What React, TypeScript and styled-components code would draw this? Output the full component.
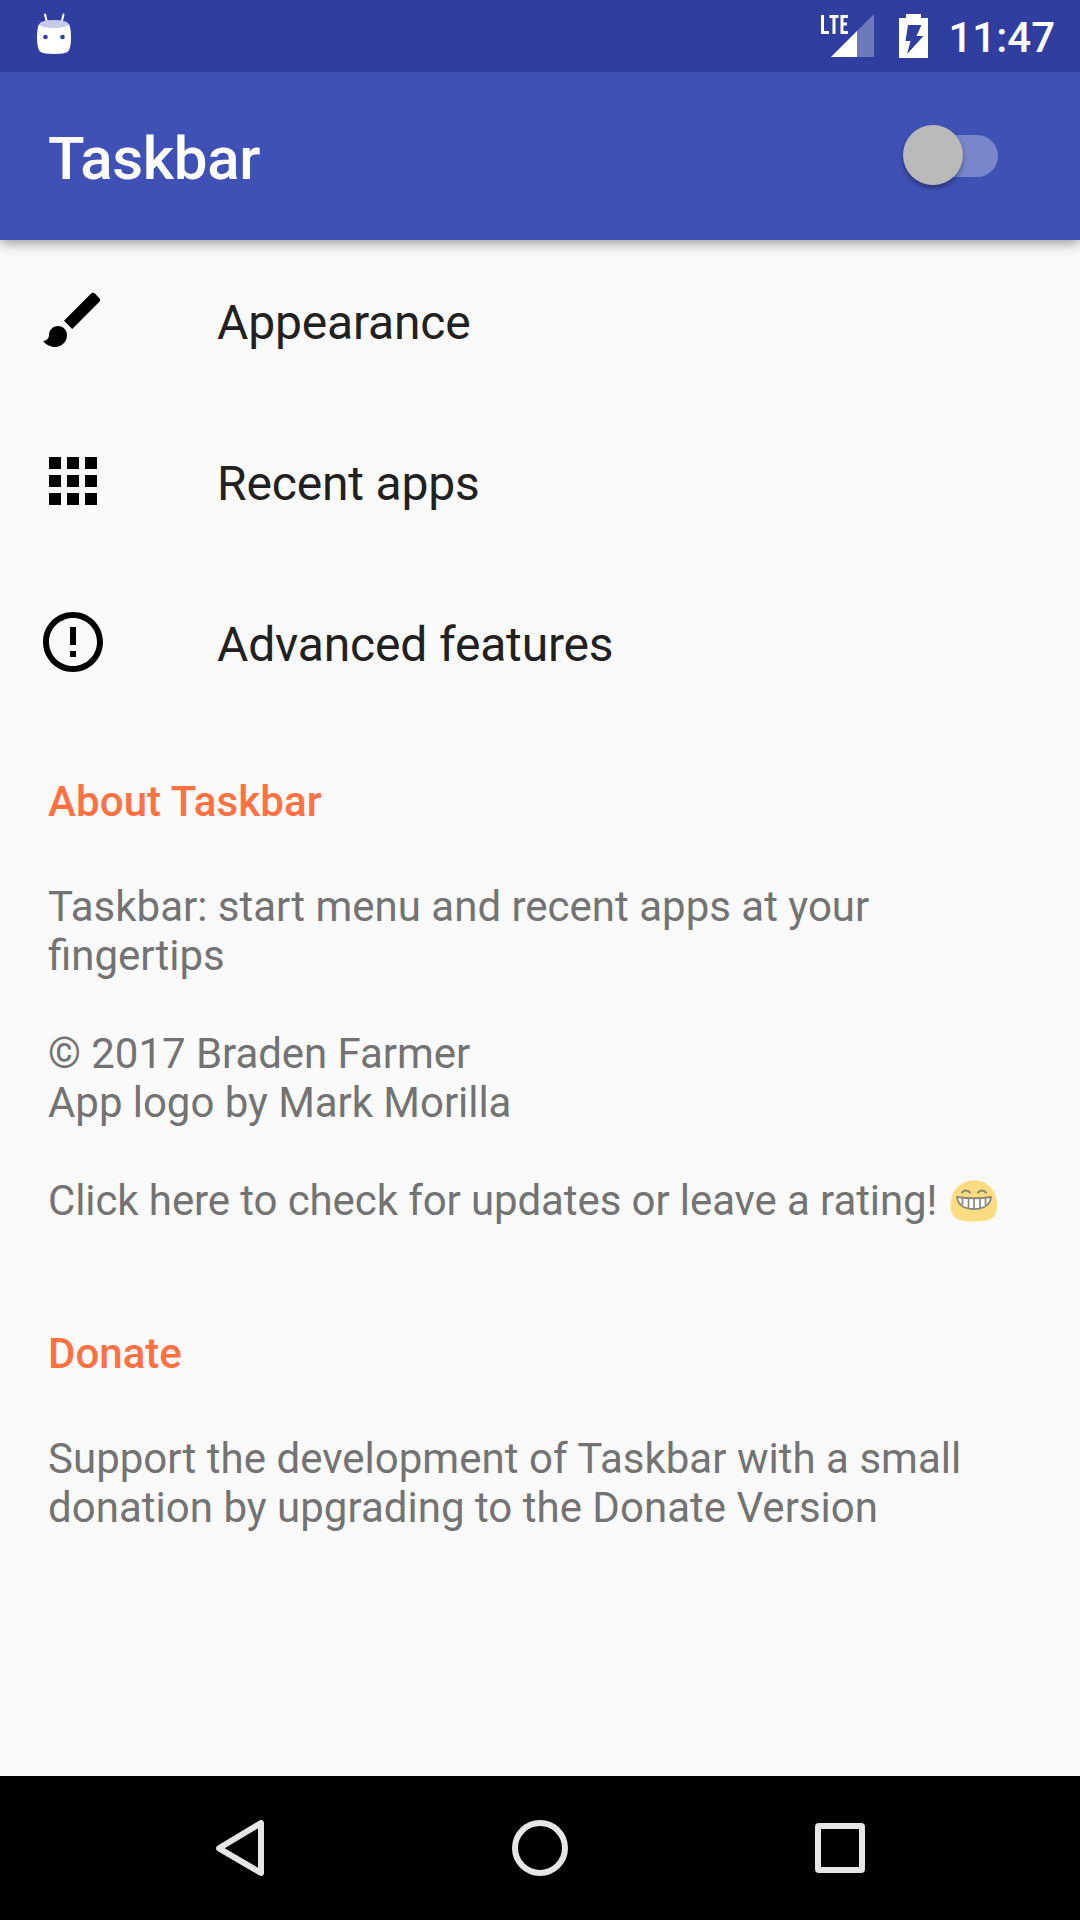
import React from "react";
import styled, { createGlobalStyle } from "styled-components";

const GlobalStyle = createGlobalStyle`
  * { box-sizing: border-box; }
  body { margin: 0; background: #fafafa; }
  svg { display: block; flex: none; }
`;

const Screen = styled.div`
  width: 1080px;
  height: 1920px;
  display: flex;
  flex-direction: column;
  overflow: hidden;
  background: #fafafa;
  font-family: Roboto, "Noto Sans", sans-serif;
`;

const StatusBar = styled.header`
  height: 72px;
  flex: none;
  z-index: 1;
  display: flex;
  align-items: center;
  justify-content: space-between;
  padding: 0 25px 0 36px;
  background: #303f9f;
  color: #fff;
`;

const StatusIcons = styled.div`
  display: flex;
  align-items: center;
`;

const Clock = styled.time`
  margin-left: 20px;
  padding-top: 4px;
  font-size: 42px;
  line-height: 50px;
  font-weight: 500;
`;

const Spacer = styled.span`
  width: 24px;
`;

const NotificationSlot = styled.div`
  padding-bottom: 5px;
`;

const AppBar = styled.div`
  height: 168px;
  flex: none;
  display: flex;
  align-items: center;
  justify-content: space-between;
  padding: 0 82px 0 48px;
  background: #3f51b5;
  box-shadow: 0 3px 12px rgba(0, 0, 0, 0.4);
`;

const Title = styled.h1`
  margin: 0;
  padding-top: 5px;
  font-size: 60px;
  line-height: 70px;
  font-weight: 500;
  letter-spacing: -0.35px;
  color: #fff;
`;

const Switch = styled.button`
  display: flex;
  align-items: center;
  width: 92px;
  height: 42px;
  margin: 0;
  padding: 0;
  border: 0;
  border-radius: 21px;
  background: #7986cb;
`;

const Thumb = styled.span`
  flex: none;
  width: 60px;
  height: 60px;
  margin-left: -3.5px;
  margin-top: -2px;
  border-radius: 50%;
  background: #b9b9b9;
  box-shadow: 0 3px 5px rgba(0, 0, 0, 0.35);
`;

const Menu = styled.nav`
  display: flex;
  flex-direction: column;
  gap: 1px;
  flex: none;
`;

const MenuRow = styled.div`
  display: flex;
  align-items: center;
  height: 160px;
  padding-left: 37px;
  gap: 108px;
  font-size: 48px;
  line-height: 56px;
  letter-spacing: -0.17px;
  color: #212121;
`;

const MenuLabel = styled.span`
  padding-top: 6px;
`;

const Section = styled.section<{ $top: number }>`
  flex: none;
  padding: ${(p) => p.$top}px 48px 0;
`;

const SectionTitle = styled.h2<{ $tracking?: number }>`
  margin: 0 0 56px;
  font-size: 42px;
  line-height: 49px;
  font-weight: 500;
  letter-spacing: ${(p) => p.$tracking ?? 0}px;
  color: #ff7043;
`;

const Paragraph = styled.p<{ $tracking?: number }>`
  margin: 0 0 49px;
  font-size: 42px;
  line-height: 49px;
  letter-spacing: ${(p) => p.$tracking ?? 0}px;
  white-space: nowrap;
  color: #737373;
`;

const Emoji = styled.svg`
  && { display: inline-block; vertical-align: -7px; margin-left: 2px; }
`;

const NavBar = styled.footer`
  height: 144px;
  flex: none;
  margin-top: auto;
  display: flex;
  align-items: center;
  justify-content: center;
  gap: 228px;
  background: #000;
`;

const AndroidIcon = () => (
  <svg width="36" height="42" viewBox="0 0 36 42">
    <path d="M9 1.500l2 8M27.500 1.500l-2 8" stroke="#fff" strokeWidth="2" strokeLinecap="round" />
    <path d="M3 11Q1 16 1 24Q1 34 3.500 38Q5 41 18 41Q31 41 32.500 38Q35 34 35 24Q35 16 33 11Q31 14 18 14Q5 14 3 11Z" fill="#fff" />
    <ellipse cx="18" cy="11" rx="14.500" ry="4" fill="#c5cae9" />
    <circle cx="9.500" cy="24" r="2.300" fill="#303f9f" />
    <circle cx="26.500" cy="24" r="2.300" fill="#303f9f" />
  </svg>
);

const SignalIcon = () => (
  <svg width="54" height="44" viewBox="0 0 54 44">
    <path d="M53 0V43H10Z" fill="#fff" opacity="0.3" />
    <path d="M36 17V43H10Z" fill="#fff" />
    <path d="M1.500 1V18.500H8M8.500 2.500H17.500M13 2.500V20M27 2.500H21V18.500H27M21 10H26" fill="none" stroke="#fff" strokeWidth="3" />
  </svg>
);

const BatteryIcon = () => (
  <svg width="29" height="44" viewBox="0 0 29 44">
    <path fillRule="evenodd" d="M7 0H22V4H29V44H0V4H7ZM9 11L6.500 27H11.500L8 40L24.500 22H17.500L22.500 11Z" fill="#fff" />
  </svg>
);

const BrushIcon = () => (
  <svg width="72" height="72" viewBox="0 0 24 24">
    <path d="M7 14c-1.660 0-3 1.340-3 3 0 1.310-1.160 2-2 2 .92 1.220 2.490 2 4 2 2.210 0 4-1.790 4-4 0-1.660-1.340-3-3-3zm13.710-9.370l-1.340-1.340a.996.996 0 0 0-1.410 0L9 12.250 11.750 15l8.960-8.960a.996.996 0 0 0 0-1.410z" />
  </svg>
);

const AppsIcon = () => (
  <svg width="72" height="72" viewBox="0 0 24 24">
    <path d="M4 8h4V4H4v4zm6 12h4v-4h-4v4zm-6 0h4v-4H4v4zm0-6h4v-4H4v4zm6 0h4v-4h-4v4zm6-10v4h4V4h-4zm-6 4h4V4h-4v4zm6 6h4v-4h-4v4zm0 6h4v-4h-4v4z" />
  </svg>
);

const AlertIcon = () => (
  <svg width="72" height="72" viewBox="0 0 24 24">
    <path d="M11 15h2v2h-2zm0-8h2v6h-2zm.99-5C6.470 2 2 6.480 2 12s4.470 10 9.990 10C17.520 22 22 17.520 22 12S17.520 2 11.990 2zM12 20c-4.420 0-8-3.580-8-8s3.580-8 8-8 8 3.580 8 8-3.580 8-8 8z" />
  </svg>
);

const GrinEmoji = () => (
  <Emoji width="48" height="42" viewBox="0 0 48 42" role="img" aria-label="grinning face">
    <path d="M24 .5C38 .5 47 11 47 25C47 37 42 41.500 24 41.500S.5 37 .5 25C.5 11 10 .5 24 .5Z" fill="#fbdc80" />
    <path d="M12 12.500Q15.500 8.500 20 12.500M28 12.500Q32 8.500 36 12.500" fill="none" stroke="#8a8672" strokeWidth="1.900" strokeLinecap="round" />
    <path d="M7 17Q24 19.500 41 17C40 25 34 29 24 29S8 25 7 17Z" fill="#fff" stroke="#8b897c" strokeWidth="1.900" strokeLinejoin="round" />
    <path d="M12.500 18V25M18.500 18.500V28M24 18.500V28.500M30 18.500V28M35.500 18V25" stroke="#8b897c" strokeWidth="1.700" />
  </Emoji>
);

const NavGlyph = ({ children }: { children: React.ReactNode }) => (
  <svg width="72" height="72" viewBox="0 0 72 72" fill="none" stroke="#e6e6e6" strokeWidth="6" strokeLinejoin="round">
    {children}
  </svg>
);

const menu = [
  { label: "Appearance", Icon: BrushIcon },
  { label: "Recent apps", Icon: AppsIcon },
  { label: "Advanced features", Icon: AlertIcon },
];

export default function App() {
  return (
    <>
      <GlobalStyle />
      <Screen>
        <StatusBar>
          <NotificationSlot>
            <AndroidIcon />
          </NotificationSlot>
          <StatusIcons>
            <SignalIcon />
            <Spacer />
            <BatteryIcon />
            <Clock>11:47</Clock>
          </StatusIcons>
        </StatusBar>
        <AppBar>
          <Title>Taskbar</Title>
          <Switch role="switch" aria-checked={false}>
            <Thumb />
          </Switch>
        </AppBar>
        <Menu>
          {menu.map(({ label, Icon }) => (
            <MenuRow key={label}>
              <Icon />
              <MenuLabel>{label}</MenuLabel>
            </MenuRow>
          ))}
        </Menu>
        <Section $top={55}>
          <SectionTitle $tracking={0.12}>About Taskbar</SectionTitle>
          <Paragraph>
            Taskbar: start menu and recent apps at your
            <br />
            fingertips
          </Paragraph>
          <Paragraph $tracking={-0.05}>
            © 2017 Braden Farmer
            <br />
            App logo by Mark Morilla
          </Paragraph>
          <Paragraph $tracking={-0.1}>
            Click here to check for updates or leave a rating! <GrinEmoji />
          </Paragraph>
        </Section>
        <Section $top={55}>
          <SectionTitle>Donate</SectionTitle>
          <Paragraph $tracking={0.02}>
            Support the development of Taskbar with a small
            <br />
            donation by upgrading to the Donate Version
          </Paragraph>
        </Section>
        <NavBar>
          <NavGlyph>
            <path d="M57 11V61L15 36.300Z" />
          </NavGlyph>
          <NavGlyph>
            <circle cx="36" cy="36" r="25" />
          </NavGlyph>
          <NavGlyph>
            <rect x="14" y="14" width="44" height="44" rx="1" />
          </NavGlyph>
        </NavBar>
      </Screen>
    </>
  );
}
